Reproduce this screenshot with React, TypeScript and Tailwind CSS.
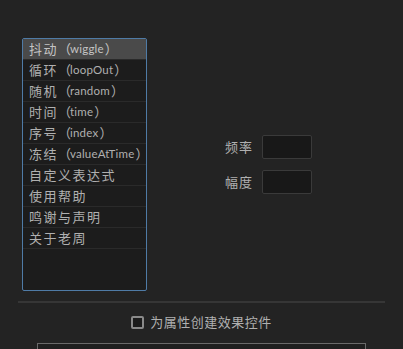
import React from "react";

const items: { zh: string; en?: string }[] = [
  { zh: "抖动", en: "wiggle" },
  { zh: "循环", en: "loopOut" },
  { zh: "随机", en: "random" },
  { zh: "时间", en: "time" },
  { zh: "序号", en: "index" },
  { zh: "冻结", en: "valueAtTime" },
  { zh: "自定义表达式" },
  { zh: "使用帮助" },
  { zh: "鸣谢与声明" },
  { zh: "关于老周" },
];

export default function App() {
  return (
    <div className="w-[403px] h-[349px] overflow-hidden bg-[#232323] text-[#b0b0b0] font-['Noto_Sans_CJK_SC',sans-serif]">
      <div className="flex pt-[38px] pl-[22px]">
        <div className="w-[125px] h-[253px] border border-[#4f7ba6] rounded-[2px] bg-[#1c1c1c] flex flex-col overflow-hidden">
          {items.map((t, i) => (
            <div
              key={t.zh}
              className={
                i === 0
                  ? "h-[21px] shrink-0 flex items-center pl-[6px] text-[13px] whitespace-nowrap border-b border-[#2a2a2a] bg-[#4a4a4a] text-[#c4c4c4]"
                  : "h-[21px] shrink-0 flex items-center pl-[6px] text-[13px] whitespace-nowrap border-b border-[#2a2a2a]"
              }
            >
              <span className="shrink-0 tracking-[1.5px]">{t.zh}</span>
              {t.en && (
                <>
                  <span className="shrink-0 tracking-[-3px]">（</span>
                  <span className="shrink-0 ml-[2px] text-[11.5px] font-['Lato',sans-serif] tracking-[0.2px]">
                    {t.en}
                  </span>
                  <span className="shrink-0 ml-[1px]">）</span>
                </>
              )}
            </div>
          ))}
        </div>
        <div className="flex flex-col justify-center gap-[11px] ml-[78px]">
          <div className="flex items-center">
            <span className="text-[13px] tracking-[1px] w-[37px]">频率</span>
            <div className="w-[50px] h-[24px] border border-[#3a3a3a] rounded-[2px] bg-[#181818]" />
          </div>
          <div className="flex items-center">
            <span className="text-[13px] tracking-[1px] w-[37px]">幅度</span>
            <div className="w-[50px] h-[24px] border border-[#3a3a3a] rounded-[2px] bg-[#181818]" />
          </div>
        </div>
      </div>
      <div className="mt-[10px] mx-[18px] h-[2px] bg-[#363636]" />
      <div className="flex justify-center items-center h-[22px] mt-[8px]">
        <div className="w-[13px] h-[13px] border-2 border-[#8a8a8a] rounded-[2px] bg-[#1c1c1c] mr-[6px]" />
        <span className="text-[13px] tracking-[0.5px]">为属性创建效果控件</span>
      </div>
      <div className="mt-[10px] mx-[37px] h-[30px] border border-[#6a6a6a] bg-[#1f1f1f]" />
    </div>
  );
}
